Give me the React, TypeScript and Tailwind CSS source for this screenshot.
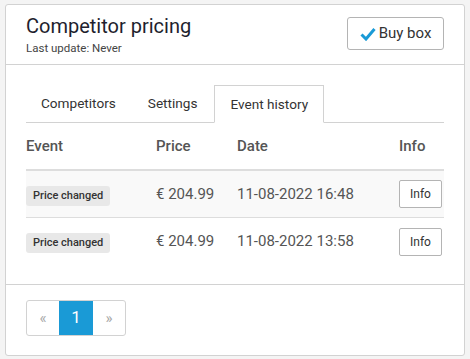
import React from "react";

const font = { fontFamily: "Roboto, 'Liberation Sans', sans-serif" };

function Check() {
  return (
    <svg width="16" height="14" viewBox="0 0 16 14" className="mr-[3px]">
      <path d="M1.5 7.5 L6 12 L14.5 2" stroke="#1a9ad6" strokeWidth="3" fill="none" strokeLinejoin="miter" />
    </svg>
  );
}

const rows = [
  { price: "€ 204.99", date: "11-08-2022 16:48", bg: "bg-[#f9f9f9]", border: "border-b border-[#dddddd]" },
  { price: "€ 204.99", date: "11-08-2022 13:58", bg: "bg-white", border: "" },
];

export default function App() {
  return (
    <div className="w-[470px] h-[359px] bg-[#f4f4f4] pt-[4px] pl-[5px]" style={font}>
      <div className="w-[460px] h-[352px] bg-white border border-[#d2d2d2] rounded-[3px] flex flex-col">
        <div className="h-[60px] border-b border-[#d2d2d2] flex items-start justify-between pl-[20px] pr-[20px] shrink-0">
          <div className="pt-[8px]">
            <div className="text-[20px] leading-[26px] text-[#1f1f2e]">Competitor pricing</div>
            <div className="text-[11.5px] leading-[16px] text-[#444] mt-[1px]">Last update: Never</div>
          </div>
          <button className="mt-[12px] w-[97px] h-[33px] border border-[#b4b4b4] rounded-[3px] flex items-center justify-center text-[15px] text-[#333] bg-white">
            <Check />
            Buy box
          </button>
        </div>
        <div className="px-[20px] pt-[20px] pb-[19px] border-b border-[#d2d2d2] shrink-0">
          <div className="flex border-b border-[#d2d2d2] h-[38px]">
            <div className="px-[15px] mr-[2px] h-[37px] flex items-center text-[13.6px] text-[#333]">Competitors</div>
            <div className="px-[15px] mr-[2px] h-[37px] flex items-center text-[13.6px] text-[#333]">Settings</div>
            <div className="px-[15px] h-[38px] -mb-px flex items-center text-[13.6px] text-[#333] bg-white border border-[#d2d2d2] border-b-white">Event history</div>
          </div>
          <div className="grid grid-cols-[130px_81px_162px_1fr] h-[48px] items-center border-b-2 border-[#dddddd] text-[15px] font-medium text-[#555]">
            <div>Event</div>
            <div>Price</div>
            <div>Date</div>
            <div>Info</div>
          </div>
          {rows.map((r, i) => (
            <div key={i} className={`grid grid-cols-[130px_81px_162px_1fr] h-[47px] items-center ${r.bg} ${r.border} text-[15px] text-[#555]`}>
              <div>
                <span className="inline-block bg-[#e8e8e8] rounded-[3px] px-[7px] h-[20px] leading-[20px] text-[11px] font-medium text-[#333]">Price changed</span>
              </div>
              <div>{r.price}</div>
              <div>{r.date}</div>
              <div>
                <button className="w-[43px] h-[28px] border border-[#b4b4b4] rounded-[2px] bg-white text-[12px] text-[#333]">Info</button>
              </div>
            </div>
          ))}
        </div>
        <div className="px-[20px] pt-[15px]">
          <div className="inline-flex h-[36px] border border-[#d2d2d2] rounded-[3px] overflow-hidden">
            <div className="w-[32px] flex items-center justify-center text-[15px] text-[#a8a8a8]">«</div>
            <div className="w-[34px] flex items-center justify-center text-[17px] text-white bg-[#1a9ad6]">1</div>
            <div className="w-[32px] flex items-center justify-center text-[15px] text-[#a8a8a8]">»</div>
          </div>
        </div>
      </div>
    </div>
  );
}
